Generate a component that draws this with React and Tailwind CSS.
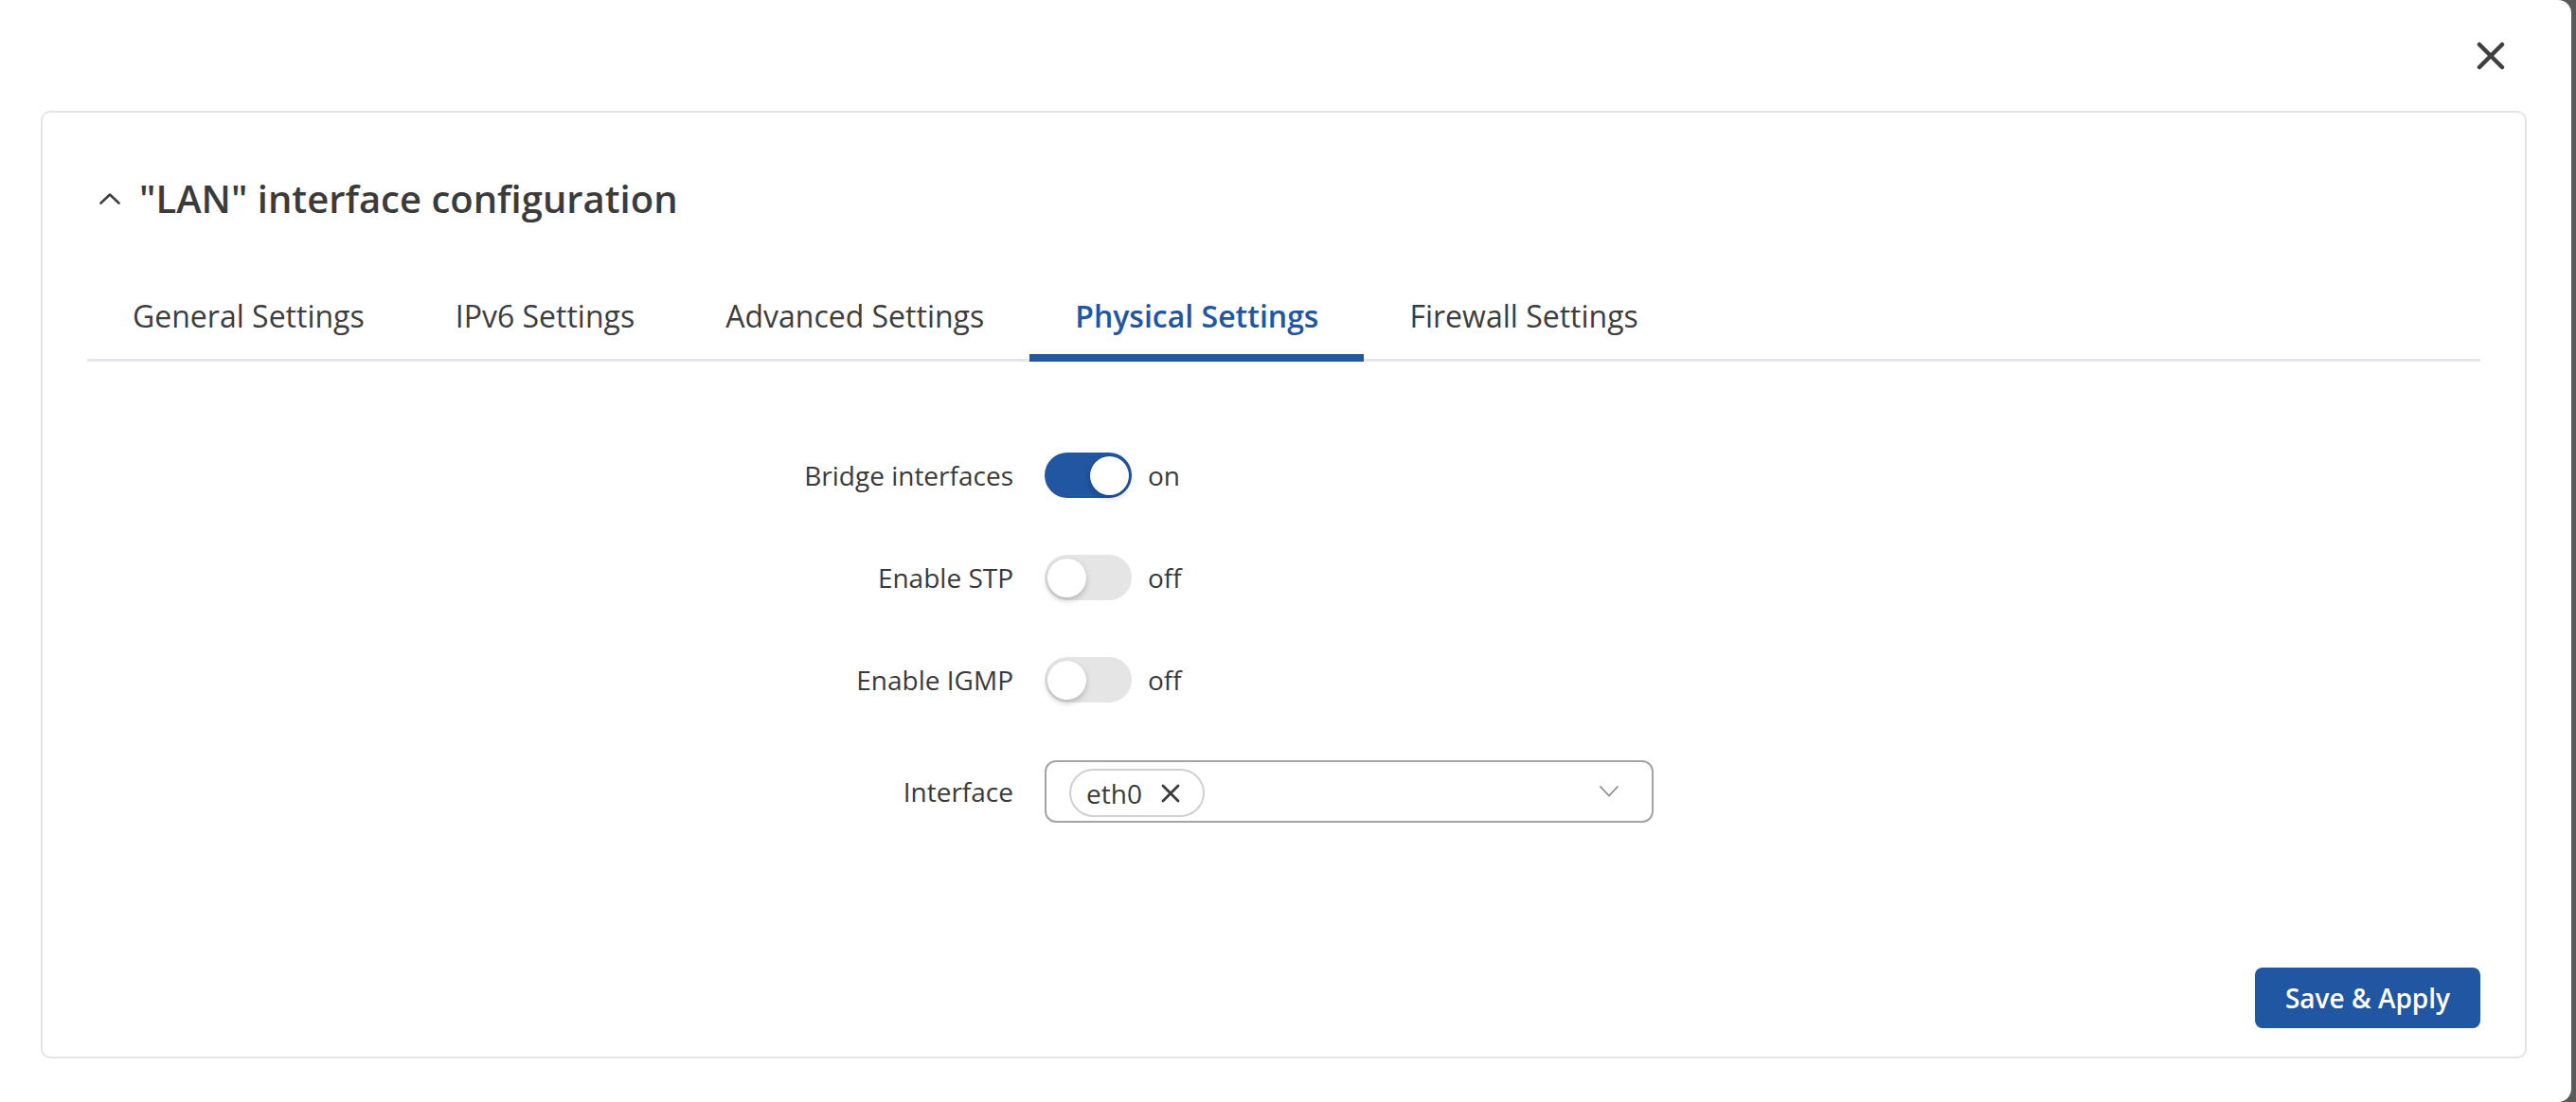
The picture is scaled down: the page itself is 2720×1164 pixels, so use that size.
import React from "react";

function Toggle({ on }) {
  return (
    <div
      className={
        "relative w-[92px] h-[48px] rounded-full shrink-0 " +
        (on ? "bg-[#2156a2]" : "bg-[#e5e5e5]")
      }
    >
      <div
        className={
          "absolute top-[3.5px] w-[41px] h-[41px] rounded-full bg-white shadow-[0_3px_6px_rgba(0,0,0,0.22)] " +
          (on ? "left-[48px]" : "left-[3px]")
        }
      />
    </div>
  );
}

function Row({ label, children }) {
  return (
    <>
      <div className="flex items-center justify-end text-[28px] text-[#3a3a3a]">{label}</div>
      <div className="flex items-center">{children}</div>
    </>
  );
}

export default function App() {
  const tabs = [
    "General Settings",
    "IPv6 Settings",
    "Advanced Settings",
    "Physical Settings",
    "Firewall Settings",
  ];
  return (
    <div className="w-[2720px] h-[1164px] bg-[#5a5a5a] flex font-['Open_Sans',sans-serif]">
      <div className="w-[2715px] h-[1164px] bg-white rounded-r-[14px] flex flex-col pl-[43px] pr-[47px] pb-[46px]">
        <div className="h-[117px] shrink-0 flex items-center justify-end pr-[23px]">
          <svg width="30" height="30" viewBox="0 0 30 30">
            <path d="M3 3 L27 27 M27 3 L3 27" stroke="#3f3f3f" strokeWidth="4.5" strokeLinecap="round" fill="none" />
          </svg>
        </div>
        <div className="flex-1 border-2 border-[#e4e4e4] rounded-[10px] px-[47px] pt-[61px] pb-[30px] flex flex-col">
          <div className="h-[60px] flex items-center">
            <svg width="22" height="12" viewBox="0 0 22 12" className="ml-[13px] mr-[20px]">
              <path d="M1.5 10.5 L11 1.5 L20.5 10.5" stroke="#404040" strokeWidth="2.6" fill="none" strokeLinecap="round" strokeLinejoin="round" />
            </svg>
            <div className="text-[40px] font-semibold text-[#3b3b3b] leading-none">"LAN" interface configuration</div>
          </div>
          <div className="mt-[72px] flex border-b-[3px] border-[#e6e6eb]">
            {tabs.map((t) => {
              const active = t === "Physical Settings";
              return (
                <div
                  key={t}
                  className={
                    "-mb-[3px] px-[48px] pb-[18px] border-b-[8px] text-[32px] leading-[44px] " +
                    (active
                      ? "border-[#2156a2] text-[#2156a2] font-semibold"
                      : "border-transparent text-[#3d3d3d]")
                  }
                >
                  {t}
                </div>
              );
            })}
          </div>
          <div className="mt-[96px] grid grid-cols-[978px_1fr] gap-x-[33px] gap-y-[60px]">
            <Row label="Bridge interfaces">
              <Toggle on />
              <span className="ml-[17px] text-[28px] text-[#3a3a3a]">on</span>
            </Row>
            <Row label="Enable STP">
              <Toggle />
              <span className="ml-[17px] text-[28px] text-[#3a3a3a]">off</span>
            </Row>
            <Row label="Enable IGMP">
              <Toggle />
              <span className="ml-[17px] text-[28px] text-[#3a3a3a]">off</span>
            </Row>
            <Row label="Interface">
              <div className="mt-[1px] w-[643px] h-[66px] border-2 border-[#a3a3aa] rounded-[12px] flex items-center pl-[24px] pr-[35px]">
                <div className="mt-[3px] h-[51px] border-2 border-[#d0d0d0] rounded-full flex items-center pl-[16px] pr-[24px] text-[28px] text-[#3a3a3a]">
                  <span>eth0</span>
                  <svg width="20" height="20" viewBox="0 0 20 20" className="ml-[20px]">
                    <path d="M2 2 L18 18 M18 2 L2 18" stroke="#3a3a3a" strokeWidth="2.8" strokeLinecap="round" fill="none" />
                  </svg>
                </div>
                <div className="flex-1" />
                <svg width="20" height="12" viewBox="0 0 20 12">
                  <path d="M1 1 L10 10.5 L19 1" stroke="#8a8a8a" strokeWidth="1.8" fill="none" strokeLinecap="round" strokeLinejoin="round" />
                </svg>
              </div>
            </Row>
          </div>
          <div className="flex-1" />
          <div className="flex justify-end">
            <button className="w-[238px] h-[64px] rounded-[8px] bg-[#2156a2] text-white text-[28px] font-semibold">
              Save &amp; Apply
            </button>
          </div>
        </div>
      </div>
    </div>
  );
}
